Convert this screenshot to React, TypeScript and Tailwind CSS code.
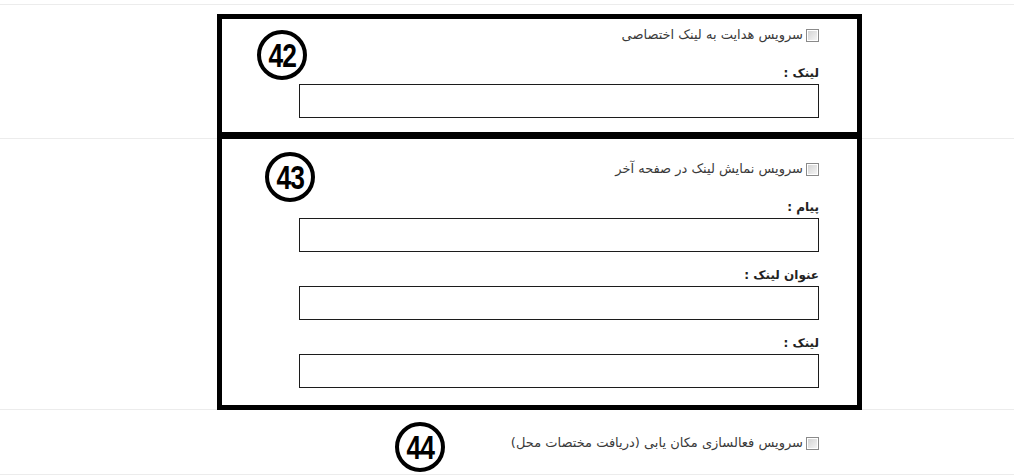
import React from 'react';

const font = { fontFamily: 'Tahoma, "DejaVu Sans", sans-serif' };

function CheckBox() {
  return (
    <span className="inline-block h-[13px] w-[13px] shrink-0 border border-[#8a8a8a] bg-white p-[1px]">
      <span className="block h-full w-full bg-linear-to-br from-[#d4d4d4] to-[#f4f4f4]" />
    </span>
  );
}

function CheckLine({ text }: { text: string }) {
  return (
    <label className="flex h-[18px] items-center gap-[3px] text-[13px] text-[#3a3a3a]">
      <CheckBox />
      <span className="leading-[18px]">{text}</span>
    </label>
  );
}

function Field({ label, gap }: { label: string; gap: string }) {
  return (
    <div className={gap}>
      <div className="h-[18px] text-[12px] font-bold leading-[18px] text-[#222]">{label}</div>
      <input
        type="text"
        className="mt-[2px] block h-[34px] w-full border border-[#1c1c1c] bg-white outline-none"
      />
    </div>
  );
}

function Marker({ n, className }: { n: number; className: string }) {
  return (
    <div
      className={`absolute flex h-[50px] w-[50px] items-center justify-center rounded-full border-[4px] border-black bg-white text-black ${className}`}
      style={{ fontFamily: '"Liberation Sans Narrow", "Liberation Sans", Arial, sans-serif' }}
    >
      <span className="inline-block scale-x-[0.8] text-[33px] font-bold leading-none tracking-[-1px]">{n}</span>
    </div>
  );
}

function Column({ children }: { children: React.ReactNode }) {
  return (
    <div className="flex justify-end pr-[195px]">
      <div dir="rtl" className="w-[520px]">
        {children}
      </div>
    </div>
  );
}

export default function App() {
  return (
    <div className="h-[476px] w-[1014px] overflow-hidden bg-white pt-[4px]" style={font}>
      {/* redirect to custom link */}
      <div className="relative border-y border-[#ececec] pb-[20px] pt-[21px]">
        <Column>
          <CheckLine text="سرویس هدایت به لینک اختصاصی" />
          <Field label="لینک :" gap="mt-[20px]" />
        </Column>
        <div className="pointer-events-none absolute left-[217px] top-[9px] h-[123px] w-[645px] border-[5px] border-black" />
        <Marker n={42} className="left-[257px] top-[25px]" />
      </div>

      {/* show link on last page */}
      <div className="relative border-b border-[#ececec] pb-[21px] pt-[21px]">
        <Column>
          <CheckLine text="سرویس نمایش لینک در صفحه آخر" />
          <Field label="پیام :" gap="mt-[20px]" />
          <Field label="عنوان لینک :" gap="mt-[14px]" />
          <Field label="لینک :" gap="mt-[14px]" />
        </Column>
        <div className="pointer-events-none absolute -top-[5px] left-[217px] h-[276px] w-[645px] border-[5px] border-black" />
        <Marker n={43} className="left-[265px] top-[13px]" />
      </div>

      {/* location service */}
      <div className="relative border-b border-[#ececec] pb-[22px] pt-[24px]">
        <Column>
          <CheckLine text="سرویس فعالسازی مکان یابی (دریافت مختصات محل)" />
        </Column>
        <Marker n={44} className="left-[395px] top-[12px]" />
      </div>
    </div>
  );
}
